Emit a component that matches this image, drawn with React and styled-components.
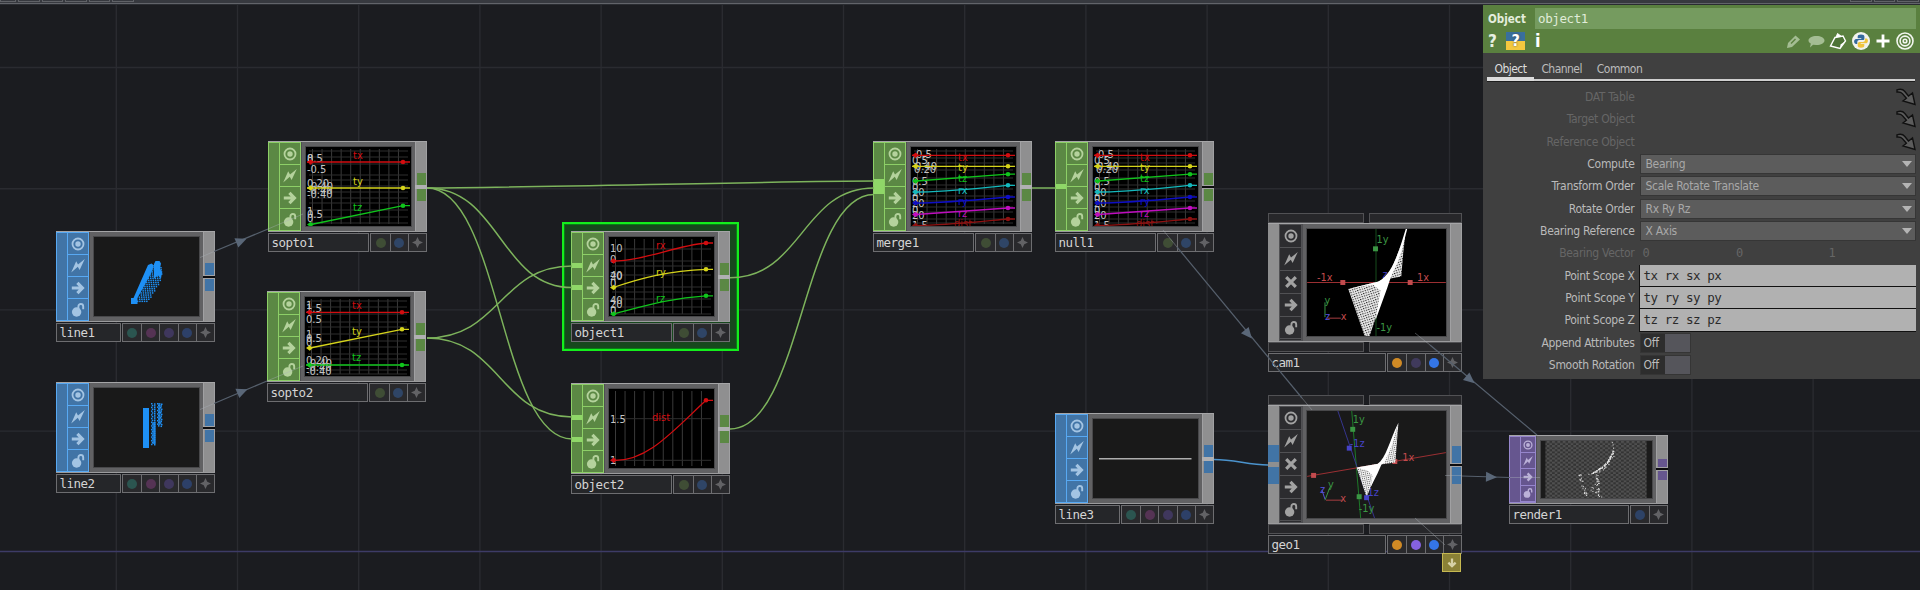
import React from 'react';
import styled, { createGlobalStyle } from 'styled-components';

const Global = createGlobalStyle`
  * { box-sizing: border-box; }
  body { margin: 0; background: #1b1c20; overflow: hidden; }
`;

const sans = '"DejaVu Sans Condensed", "DejaVu Sans", sans-serif';
const mono = '"DejaVu Sans Mono", monospace';

const families = {
  chop: { fill: '#5b8844', line: '#8dcf67', icon: '#b4d29c' },
  sop: { fill: '#4174a6', line: '#58a9f3', icon: '#a3c4e3' },
  top: { fill: '#66568f', line: '#9686cc', icon: '#bbb1d8' },
  comp: { fill: '#2c2c2f', line: '#515154', icon: '#a2a2a2' },
};

const Page = styled.div`
  display: flex;
  flex-direction: column;
  width: 1920px;
  height: 590px;
  background: #1b1c20;
`;
const TopBar = styled.div`
  height: 5px;
  flex: none;
  display: flex;
  justify-content: space-between;
  background: linear-gradient(#37393f 0 3px, #62646a 3px 4px, #2a2c31 4px);
`;
const TabGroup = styled.div`
  display: flex;
  gap: 2px;
  height: 2px;
  width: ${(p) => p.$w}px;
  overflow: hidden;
`;
const TabEdge = styled.i`
  flex: none;
  width: ${(p) => p.$w || 21.5}px;
  height: 2px;
  border: 1px solid #606267;
  border-top: 0;
`;
const Canvas = styled.main`
  position: relative;
  flex: 1;
  overflow: hidden;
`;
const Layer = styled.svg`
  position: absolute;
  left: 0;
  top: -5px;
  width: 1920px;
  height: 590px;
  pointer-events: none;
`;

/* ---------- nodes ---------- */
const NodeBox = styled.section`
  position: absolute;
  left: ${(p) => p.$x}px;
  top: ${(p) => p.$y - 5}px;
  width: ${(p) => p.$w}px;
  display: flex;
  flex-direction: column;
`;
const Selection = styled.div`
  position: absolute;
  left: 562px;
  top: 217px;
  width: 177px;
  height: 129px;
  border: 2px solid #14ee1d;
  outline: 1px solid #0b7a17;
  outline-offset: -3px;
  background: #17481d;
`;
const Body = styled.div`
  display: flex;
  height: ${(p) => p.$h}px;
  border-top: 1px solid #a5a5a7;
  border-bottom: 1px solid #9b9b9d;
  background: #616163;
`;
const InStrip = styled.div`
  width: 11px;
  display: flex;
  flex-direction: column;
  justify-content: center;
  gap: ${(p) => p.$gap || 4}px;
  background: ${(p) => (p.$kind === 'comp' ? '#8f8f90' : families[p.$kind].fill)};
  border: ${(p) => (p.$kind === 'comp' ? '0' : `1px solid ${families[p.$kind].line}`)};
  border-right: 0;
`;
const InPort = styled.i`
  display: block;
  width: 11px;
  height: ${(p) => p.$h}px;
  background: ${(p) => p.$c};
`;
const Buttons = styled.div`
  width: ${(p) => p.$w}px;
  display: flex;
  flex-direction: column;
  border: 1px solid ${(p) => families[p.$kind].line};
  background: ${(p) => families[p.$kind].fill};
  color: ${(p) => families[p.$kind].icon};
`;
const Button = styled.div`
  flex: ${(p) => (p.$h ? `0 0 ${p.$h}px` : '1')};
  min-height: 0;
  display: flex;
  align-items: center;
  justify-content: center;
  border-bottom: 1px solid ${(p) => families[p.$kind].line};
  &:last-child { border-bottom: ${(p) => (p.$h ? '' : 0)}; }
  svg { width: ${(p) => p.$s}px; height: ${(p) => p.$s}px; }
`;
const Frame = styled.div`
  flex: 1;
  display: flex;
  padding: 5px 4px;
  border-left: 1px solid #4e4e51;
`;
const View = styled.div`
  flex: 1;
  background: ${(p) => p.$bg};
  outline: 1px solid #48484a;
  overflow: hidden;
  svg { display: block; width: 100%; height: 100%; }
`;
const OutStrip = styled.div`
  width: 12px;
  display: flex;
  flex-direction: column;
  align-items: center;
  justify-content: center;
  background: #8f8f90;
  border-left: 1px solid #a0a0a2;
  border-right: 1px solid #a0a0a2;
`;
const OutPort = styled.i`
  width: 9px;
  height: ${(p) => p.$h}px;
  background: ${(p) => p.$c};
`;
const Bar = styled.i`
  height: 4px;
  width: 12px;
  background: ${(p) => (p.$open ? '#0c0c0e' : '#b0b0b2')};
  border: ${(p) => (p.$open ? '1px solid #a2a2a4' : 0)};
  border-width: 1px 0;
  flex: none;
`;
const Foot = styled.div`
  display: flex;
  gap: 1px;
  height: 19px;
  margin-top: 1px;
`;
const Name = styled.div`
  flex: 1;
  border: 1px solid #6d6d70;
  background: #252629;
  color: #d4d4d4;
  font: 12.5px/17px ${mono};
  letter-spacing: -0.5px;
  padding-left: 2.5px;
`;
const Flags = styled.div`
  display: flex;
  border: 1px solid #6d6d70;
  background: #29292c;
`;
const Flag = styled.div`
  width: 18.2px;
  display: flex;
  align-items: center;
  justify-content: center;
  border-left: 1px solid #6d6d70;
  color: #626265;
  &:first-child { border-left: 0; }
  svg { width: 11px; height: 11px; }
`;
const Dot = styled.i`
  width: 10px;
  height: 10px;
  border-radius: 50%;
  background: ${(p) => p.$c};
`;
const Tabs = styled.div`
  display: flex;
  gap: 5px;
  height: 10px;
`;
const Tab = styled.div`
  flex: ${(p) => p.$f};
  border: 1px solid #515154;
  background: #27272a;
`;
const DownBadge = styled.div`
  position: absolute;
  left: 1442px;
  top: 548px;
  width: 19px;
  height: 19px;
  display: flex;
  align-items: center;
  justify-content: center;
  border: 1px solid #c6b951;
  background: #8a8136;
  color: #d6d1a5;
  svg { width: 10px; height: 10px; transform: rotate(90deg); }
`;

const TargetIcon = () => (
  <svg viewBox="0 0 14 14" fill="none" stroke="currentColor">
    <circle cx="7" cy="7" r="5.5" strokeWidth="1.8" />
    <circle cx="7" cy="7" r="2.7" fill="currentColor" stroke="none" />
  </svg>
);
const BoltIcon = () => (
  <svg viewBox="0 0 14 14" fill="currentColor">
    <path d="M.2 13.600 5.200 2.200 7 5.600 13.800 0 8.600 11 6.800 7.800z" />
  </svg>
);
const ArrowIcon = () => (
  <svg viewBox="0 0 14 14" fill="none" stroke="currentColor" strokeWidth="3.2">
    <path d="M.8 7H11M6.400 1.900 11.400 7l-5 5.100" />
  </svg>
);
const LockIcon = () => (
  <svg viewBox="0 0 14 14" fill="currentColor">
    <circle cx="5.600" cy="9" r="4.700" />
    <path d="M7.400 6V3.400a2.400 2.400 0 0 1 4.800 0v2.800" fill="none" stroke="currentColor" strokeWidth="1.9" />
  </svg>
);
const CrossIcon = () => (
  <svg viewBox="0 0 14 14" fill="none" stroke="currentColor" strokeWidth="3.2">
    <path d="m2.200 2.200 9.600 9.600M11.800 2.200 2.200 11.800" />
  </svg>
);
const PlusStar = () => (
  <svg viewBox="0 0 10 10" fill="currentColor">
    <path d="M5 0 6.600 3.400 10 5 6.600 6.600 5 10 3.400 6.600 0 5 3.400 3.400z" />
  </svg>
);

const flagSets = {
  chop: ['#3f4d35', '#2f4566'],
  sop: ['#2b5550', '#553354', '#3f375d', '#2d4068'],
  top: ['#2d4266'],
  cam: ['#d08a25', '#403a5c', '#3475e6'],
  geo: ['#d08a25', '#8561e0', '#3475e6'],
};

function NodeFoot({ name, flags }) {
  return (
    <Foot>
      <Name>{name}</Name>
      <Flags>
        {flagSets[flags].map((c) => (
          <Flag key={c}><Dot $c={c} /></Flag>
        ))}
        <Flag><PlusStar /></Flag>
      </Flags>
    </Foot>
  );
}

function Node({ x, y, name, kind, inputs = [], gap, open, h = 91, buttonW = 22, bg = '#000', children }) {
  const small = kind === 'top';
  const { fill } = families[kind];
  const s = small ? 10 : 14;
  return (
    <NodeBox $x={x} $y={y} $w={159}>
      <Body $h={h}>
        <InStrip $kind={kind} $gap={gap}>
          {inputs.map((ih, i) => <InPort key={i} $h={ih} $c="#8fd768" />)}
        </InStrip>
        <Buttons $kind={kind} $w={buttonW}>
          {[TargetIcon, BoltIcon, ArrowIcon, LockIcon].map((Icon, i) => (
            <Button key={i} $kind={kind} $s={s} $h={small ? 16.2 : undefined}><Icon /></Button>
          ))}
        </Buttons>
        <Frame>
          <View $bg={bg}>{children}</View>
        </Frame>
        <OutStrip>
          <OutPort $h={small ? 8 : 12} $c={fill} />
          <Bar $open={open} />
          <OutPort $h={small ? 9 : 12} $c={fill} />
        </OutStrip>
      </Body>
      <NodeFoot name={name} flags={kind} />
    </NodeBox>
  );
}

function CompNode({ x, y, name, flags, ports, bg, children }) {
  const blue = families.sop.fill;
  return (
    <NodeBox $x={x} $y={y} $w={194}>
      <Tabs><Tab $f={96} /><Tab $f={93.5} /></Tabs>
      <Body $h={119}>
        <InStrip $kind="comp" $gap={5}>
          {ports && <><InPort $h={17} $c={blue} /><InPort $h={17} $c={blue} /></>}
        </InStrip>
        <Buttons $kind="comp" $w={23}>
          {[TargetIcon, BoltIcon, CrossIcon, ArrowIcon, LockIcon].map((Icon, i) => (
            <Button key={i} $kind="comp" $s={14} $h={22.9}><Icon /></Button>
          ))}
        </Buttons>
        <Frame>
          <View $bg={bg}>{children}</View>
        </Frame>
        <OutStrip>
          {ports && <><OutPort $h={17} $c={blue} /><Bar $open /><OutPort $h={17} $c={blue} /></>}
        </OutStrip>
      </Body>
      <Tabs><Tab $f={96} /><Tab $f={93.5} /></Tabs>
      <NodeFoot name={name} flags={flags} />
    </NodeBox>
  );
}

/* ---------- channel graphs ---------- */
const gridX = Array.from({ length: 10 }, (_, i) => 6.5 + i * 9.55);

function Graph({ curves, ticks, rows }) {
  return (
    <svg viewBox="0 0 105 79">
      <g stroke="#3a3a3a" fill="none">
        {gridX.map((x) => <line key={x} x1={x} x2={x} y1="2" y2="77" />)}
        {rows.map((y) => <line key={y} x1="3" x2="102" y1={y} y2={y} stroke="#2f2f2f" />)}
      </g>
      <g fontFamily={sans} fontSize="11" fill="#c4c4c4">
        {ticks.map(([t, y, x = 1], i) => <text key={i} x={x} y={y}>{t}</text>)}
      </g>
      {curves.map(({ name, c, d, a, b, lx = 47, ly }) => (
        <g key={name}>
          <path d={d} fill="none" stroke={c} strokeWidth="1.3" />
          <path d={`M1 ${a}l3.800-2.800 2.800 2.800-2.800 2.800z`} fill={c} />
          <circle cx="97" cy={b} r="2.3" fill={c} />
          <text x={lx} y={ly} fill={c} fontFamily={sans} fontSize="11">{name}</text>
        </g>
      ))}
    </svg>
  );
}

const RED = '#d20d10', YEL = '#d5d31b', GRN = '#10c51c';
const flat = (y) => ({ d: `M1 ${y}H104`, a: y, b: y });
const slope = (a, b) => ({ d: `M5 ${a}L97 ${b}H104`, a, b });
const ease = (a, b) => ({ d: `M3 ${a}C35 ${a} 65 ${b + 3} 97 ${b}H104`, a, b });

const graphs = {
  sopto1: {
    rows: [4, 10, 17, 28, 33, 39, 45, 51, 56, 63, 70, 76],
    ticks: [['8', 15], ['0.5', 15], ['-0.5', 26], ['0.20', 40], ['-0.40', 47], ['-0.40', 51], ['0.40', 43, 5], ['1', 68], ['0.5', 71], ['0', 75]],
    curves: [
      { name: 'tx', c: RED, ...flat(15), ly: 11.5 },
      { name: 'ty', c: YEL, ...flat(41), ly: 37.5 },
      { name: 'tz', c: GRN, ...slope(77.5, 58.7), ly: 64 },
    ],
  },
  sopto2: {
    rows: [4, 10, 17, 25, 30, 37, 44, 50, 57, 62, 68, 73, 77],
    ticks: [['1', 12], ['1.5', 14.5], ['0.5', 25.5], ['1', 41], ['0.5', 44.5], ['0', 49], ['0.20', 67], ['-0.40', 74], ['-0.40', 78], ['0.40', 70, 5]],
    curves: [
      { name: 'tx', c: RED, ...flat(15.3), ly: 11.5 },
      { name: 'ty', c: YEL, ...slope(51, 32.3), ly: 37.5 },
      { name: 'tz', c: GRN, ...flat(68), ly: 64 },
    ],
  },
  object1: {
    rows: [12, 24, 29, 38, 50, 55, 62, 70, 77],
    ticks: [['10', 14.7], ['0', 26], ['20', 43], ['40', 41.5], ['0', 50], ['40', 67], ['20', 71], ['0', 77]],
    curves: [
      { name: 'rx', c: RED, ...ease(24, 6), ly: 12 },
      { name: 'ry', c: YEL, d: 'M4 50.500C32 41 60 33.500 97 32.300H104', a: 50.5, b: 32.3, ly: 38.5 },
      { name: 'rz', c: GRN, d: 'M4 77C32 70 60 61 97 58.800H104', a: 77, b: 58.8, ly: 65 },
    ],
  },
  object2: {
    rows: [29.7, 71.3],
    ticks: [['1.5', 33.5], ['1', 75]],
    curves: [{ name: 'dist', c: RED, d: 'M4 71.300C38 73 64 42 97 11.300H104', a: 71.3, b: 11.3, lx: 43, ly: 32 }],
  },
  merge: {
    rows: [4, 11, 16, 23, 31, 38, 42, 49, 54, 60, 65, 72, 76],
    ticks: [['0.5', 11, 5], ['0.5', 17], ['0.40', 23, 4], ['0.20', 26, 3], ['0.5', 38], ['20', 49], ['0', 44], ['20', 60], ['0', 55], ['20', 71.5], ['0', 67], ['1.5', 82]],
    curves: [
      { name: 'tx', c: RED, ...flat(8.3), ly: 13.5 },
      { name: 'ty', c: YEL, ...flat(19.3), ly: 24 },
      { name: 'tz', c: GRN, ...slope(34, 27.2), ly: 35 },
      { name: 'rx', c: '#14b9bd', ...ease(45, 38.3), ly: 46.5 },
      { name: 'ry', c: '#0e0ec4', ...ease(56, 50), ly: 58 },
      { name: 'rz', c: '#bf0dbf', ...slope(67.5, 61), ly: 69.5 },
      { name: 'dist', c: '#8e1111', ...ease(78.5, 72), lx: 43, ly: 79.5 },
    ],
  },
};

/* ---------- geometry previews ---------- */
const clusterDots = (list, r = 1.5) =>
  list.map(([x, y], i) => <rect key={i} x={x} y={y} width={r} height={r} />);

const Line1View = () => {
  const pts = [];
  for (let y = 30, row = 0; y < 65; y += 2.1, row += 1) {
    const left = 57 - (y - 30) * 0.42;
    const right = 67 - Math.max(0, y - 42) * 0.62;
    for (let x = left + (row % 2) * 1.1; x < right; x += 2.3) pts.push([x, y]);
  }
  return (
    <svg viewBox="0 0 105 79" fill="#1e90f5">
      <path d="M37 61h2.500L43 53l11-25 3.500-1.500 2.500 2-3 8L43.500 61v6H37z" />
      <path d="M60 27l1.500-3h4l1.500 2.500-1 5 2 4-1 6-3-3-4 3z" />
      {clusterDots(pts)}
    </svg>
  );
};

const Line2View = () => {
  const pts = [];
  for (let i = 0; i < 23; i++) {
    pts.push([57 + (i % 2) * 0.8, 15 + i * 1.85], [60, 15.3 + i * 1.85]);
    if (i < 14) pts.push([63 + (i % 2), 15 + i * 1.7], [67 - (i % 3) * 0.5, 15.5 + i * 1.7]);
  }
  return (
    <svg viewBox="0 0 105 79" fill="#1e90f5">
      <rect x="49" y="20" width="6" height="40" />
      <path d="M58.500 34h3v22h-3zM64.500 15h2v22h-2z" opacity=".8" />
      {clusterDots(pts, 1.5)}
    </svg>
  );
};

const LineView = () => (
  <svg viewBox="0 0 105 79"><path d="M6 39.800H98.500" stroke="#adadad" strokeWidth="1.4" /></svg>
);

const axisFont = { fontFamily: sans, fontSize: 11 };

const CamView = () => (
  <svg viewBox="0 0 140 108" {...axisFont}>
    <defs>
      <pattern id="mesh" width="2.4" height="2.4" patternUnits="userSpaceOnUse" patternTransform="rotate(-18)">
        <rect width="2.4" height="2.4" fill="#e8e8e8" />
        <rect width="1.2" height="1" fill="#161616" />
      </pattern>
    </defs>
    <path d="M69.500 0V108" stroke="#174d1c" />
    <path d="M0 54H140" stroke="#9d3033" />
    <g fill="#c24b4e"><rect x="33.500" y="51.500" width="5" height="5" /><rect x="101.500" y="51.500" width="5" height="5" />
      <text x="10" y="52">-1x</text><text x="111" y="52">1x</text></g>
    <g fill="#3b9644"><rect x="66.500" y="17.500" width="5" height="5" /><text x="70" y="14">1y</text><text x="70" y="103">-1y</text></g>
    <text x="76" y="49" fill="#403dc2">z</text>
    <path d="M41.500 60.500 72 53 82 48 81 55 63 108H58z" fill="url(#mesh)" />
    <path d="M82 48 99 6 97 24 95 48 84 50z" fill="url(#mesh)" />
    <path d="M101 0 95 23C92 34 87 42 84 50L81 59 69 92 74 62 66 56 41.500 60.500 72 53C86 45 92 25 99.500 0z" fill="#fff" />
    <path d="M18 74V89" stroke="#3b9644" /><path d="M20 90H34" stroke="#a83e42" />
    <text x="17.500" y="76" fill="#3b9644">y</text><text x="18" y="92" fill="#5552dc">z</text><text x="34" y="92" fill="#c24b4e">x</text>
  </svg>
);

const GeoView = () => (
  <svg viewBox="0 0 140 108" {...axisFont}>
    <defs>
      <pattern id="mesh2" width="2" height="2" patternUnits="userSpaceOnUse" patternTransform="rotate(-12)">
        <rect width="2" height="2" fill="#f4f4f4" />
        <rect width="1" height=".8" fill="#333" />
      </pattern>
    </defs>
    <path d="M45 0 54 108" stroke="#1d7a28" />
    <path d="M31 0 68 108" stroke="#36358e" />
    <path d="M0 66 140 42" stroke="#9d3033" />
    <g fill="#c24b4e"><rect x="4" y="62.500" width="5" height="5" /><rect x="86" y="48.500" width="5" height="5" /><text x="96" y="50">1x</text></g>
    <g fill="#3b9644"><rect x="43.500" y="16" width="5" height="5" /><rect x="50" y="84" width="5" height="5" /><text x="46" y="12">1y</text><text x="52" y="101.500">-1y</text></g>
    <g fill="#4643c8"><rect x="40" y="35" width="5" height="5" /><text x="43" y="36.500">-1z</text><text x="61" y="86">1z</text></g>
    <path d="M50 57 73 53 68 67 60 87 56 75z" fill="url(#mesh2)" />
    <path d="M92 14 89 52 74 54C80 48 84 32 92 12z" fill="url(#mesh2)" />
    <path d="M92 12 85 36 78 52 75 54 71 63 64 77 66 65 61 60 50 57 71 53.500C80 47 83 30 92 12z" fill="#fff" />
    <rect x="57.500" y="85" width="5" height="5" fill="#4643c8" />
    <path d="M18 90 23 77" stroke="#3b9644" /><path d="M19 90H35" stroke="#a83e42" /><path d="M18 89 15 80" stroke="#5552dc" />
    <text x="21" y="78" fill="#3b9644">y</text><text x="13" y="83" fill="#5552dc">z</text><text x="33.500" y="92" fill="#c24b4e">x</text>
  </svg>
);

const RenderView = () => {
  const pts = [];
  let seed = 7;
  const rnd = () => ((seed = (seed * 16807) % 2147483647) / 2147483647);
  for (let i = 0; i < 100; i++) {
    const t = Math.sqrt(rnd());
    pts.push([73 - 22 * t * t * t - rnd() * 1.5 + (rnd() > 0.8 ? rnd() * 6 * t : 0), 1 + t * 32]);
  }
  for (let i = 0; i < 60; i++) {
    const t = rnd();
    const side = rnd();
    const off = side < 0.4 ? rnd() * 3 : side < 0.8 ? 18 - 6 * t + rnd() * 3 : rnd() * 18;
    pts.push([37 + t * 7 + off, 33 + t * 25]);
  }
  return (
    <svg viewBox="0 0 112 58">
      <defs>
        <pattern id="check" width="5.4" height="4.2" patternUnits="userSpaceOnUse">
          <rect width="5.4" height="4.2" fill="#333" />
          <rect width="2.9" height="2.1" fill="#505050" />
          <rect x="2.7" y="2.1" width="2.9" height="2.1" fill="#505050" />
        </pattern>
      </defs>
      <rect x="4" width="103" height="58" fill="url(#check)" />
      <g fill="#e8e8e8">{clusterDots(pts, 1)}</g>
    </svg>
  );
};

/* ---------- network wiring ---------- */
const lines = (start, end) => {
  const out = [];
  for (let v = start; v < end; v += 121.2) out.push(v);
  return out;
};

const Grid = () => (
  <Layer viewBox="0 0 1920 590">
    <g stroke="#2a2b30" strokeWidth="1.4">
      {lines(116.3, 1920).map((x) => <line key={x} x1={x} x2={x} y1="5" y2="590" />)}
      {lines(67.5, 500).map((y) => <line key={y} x1="0" x2="1920" y1={y} y2={y} />)}
    </g>
    <path d="M0 551.500H1920" stroke="#3d3b66" strokeWidth="1.5" />
  </Layer>
);

const chopWires = [
  'M427 188C520 188 780 181 874 181',
  'M427 188C500 188 500 287.500 572 287.500',
  'M427 188C500 188 500 439 572 439',
  'M427 338C500 338 500 266 572 266',
  'M427 338C500 338 500 417 572 417',
  'M730 277.700C802 277.700 802 188 874 188',
  'M730 429C802 429 802 194.500 874 194.500',
  'M1032 188H1056',
];
const links = [
  [214, 251.5, 268, 229, 241, 241],
  [214, 403.5, 267, 381, 242, 391.5],
  [1177, 247, 1302, 398, 1248, 334],
  [1430, 345, 1537, 435, 1470, 379.5],
  [1462, 476, 1510, 477.5, 1491, 477],
];
const ghosts = 'M200 257.500 214 251.500M200 409.500 214 403.500M268 229 303 214M267 381 303 366M1163 230 1177 247M1302 398 1312 410M1445 475.500H1462M1510 477.500H1540M1415 333 1430 345M1415 518 1445 545';

const Wires = () => (
  <Layer viewBox="0 0 1920 590" fill="none">
    <g stroke="#7db35c" strokeWidth="1.5">{chopWires.map((d) => <path key={d} d={d} />)}</g>
    <path d="M1214 459.500C1235 459.500 1248 465 1268 465" stroke="#4b93cd" strokeWidth="1.6" />
    <path d={ghosts} stroke="#aab2ba" opacity=".4" />
    {links.map(([x1, y1, x2, y2, ax, ay]) => (
      <g key={x1 + y1}>
        <path d={`M${x1} ${y1}L${x2} ${y2}`} stroke="#56606d" strokeWidth="1.2" />
        <path
          d="M-5-5 6 0-5 5z"
          fill="#5a6778"
          transform={`translate(${ax} ${ay}) rotate(${(Math.atan2(y2 - y1, x2 - x1) * 180) / Math.PI})`}
        />
      </g>
    ))}
  </Layer>
);

/* ---------- parameter panel ---------- */
const Panel = styled.aside`
  position: absolute;
  left: 1483px;
  top: -1px;
  width: 437px;
  height: 375px;
  display: flex;
  flex-direction: column;
  background: #404040;
  font-family: ${sans};
  letter-spacing: -0.3px;
`;
const Header = styled.header`
  height: 49px;
  flex: none;
  padding: 4px 4px 0 5px;
  background: #5a803f;
`;
const TitleRow = styled.div`
  display: flex;
  align-items: center;
  height: 21px;
`;
const Title = styled.b`
  width: 47px;
  color: #e4eddd;
  font: bold 11.5px/20px ${sans};
  letter-spacing: 0;
`;
const TitleInput = styled.div`
  flex: 1;
  height: 21px;
  padding-left: 3px;
  background: #759b5f;
  color: #e0ecd9;
  font: 12.5px/22px ${mono};
  letter-spacing: -0.4px;
`;
const IconRow = styled.div`
  display: flex;
  align-items: center;
  height: 24px;
`;
const HelpMark = styled.b`
  width: 18px;
  color: #e8f0e2;
  font: bold 17px/20px ${sans};
`;
const PyHelp = styled.b`
  width: 19px;
  height: 18px;
  background: linear-gradient(#396f9d 50%, #f3c83f 50%);
  color: #fff;
  text-align: center;
  font: bold 16px/18px ${sans};
  text-shadow: 0 0 2px #444;
`;
const Info = styled.b`
  padding-left: 10px;
  color: #fff;
  font: bold 18px/20px ${sans};
`;
const Tools = styled.div`
  margin-left: auto;
  display: grid;
  grid-template-columns: repeat(6, 22.2px);
  place-items: center;
  svg { display: block; }
`;
const TabRow = styled.nav`
  display: flex;
  height: 29px;
  margin: 0 5px 0 4px;
  border-bottom: 1px solid #1e1e1e;
  box-shadow: inset 0 -2px #cfcfcf;
`;
const TabLabel = styled.div`
  padding: 9px 7.5px 0;
  height: 28px;
  color: ${(p) => (p.$on ? '#dcdcdc' : '#bcbcbc')};
  border-bottom: ${(p) => (p.$on ? '4px solid #dcdcdc' : 0)};
  font-size: 12px;
  line-height: 14px;
  letter-spacing: -0.55px;
`;
const Rows = styled.div`
  display: flex;
  flex-direction: column;
  padding: 4px 4px 0 0;
`;
const Row = styled.div`
  height: 22.33px;
  display: flex;
  align-items: center;
`;
const Label = styled.div`
  width: 151.5px;
  margin-right: 5px;
  text-align: right;
  color: ${(p) => (p.$dim ? '#666' : '#bababa')};
  font-size: 12px;
  line-height: 20px;
  white-space: nowrap;
`;
const Select = styled.div`
  flex: 1;
  height: 20px;
  display: flex;
  align-items: center;
  justify-content: space-between;
  padding: 0 3px 0 5px;
  background: #5c5c5c;
  border: 1px solid #363636;
  color: #a8a8a8;
  font-size: 12px;
`;
const Caret = styled.i`
  border: 5px solid transparent;
  border-top: 6px solid #b4b4b4;
  border-bottom: 0;
`;
const Field = styled.div`
  flex: 1;
  height: 22.33px;
  padding-left: 4px;
  background: #b1b1b1;
  border-left: 1px solid #111;
  border-bottom: 1.5px solid #111;
  margin-left: -1px;
  color: #2a2a2a;
  font: 12.5px/22px ${mono};
  letter-spacing: -0.45px;
  white-space: pre;
`;
const Vector = styled.div`
  flex: 1;
  display: grid;
  grid-template-columns: 93.5px 92.5px 1fr;
  padding-left: 3px;
  color: #666;
  font: 12px ${mono};
`;
const Toggle = styled.div`
  width: 51px;
  height: 20px;
  display: flex;
  border: 1px solid #353535;
  background: #2d2d2d;
  color: #bcbcbc;
  font-size: 12px;
  line-height: 18px;
  padding-left: 3px;
  justify-content: space-between;
`;
const Knob = styled.i`
  width: 25px;
  background: #55555b;
`;
const RefArrow = styled.svg`
  margin-left: auto;
  width: 20px;
  height: 18px;
`;

const PythonIcon = () => (
  <svg width="18" height="18" viewBox="0 0 18 18">
    <circle cx="9" cy="9" r="9" fill="#f1f3ef" />
    <path d="M9 2.500c-2.500 0-3.300.8-3.300 2v1.800h3.600v.7H4.200c-1.200 0-2.100 1-2.100 2.600s.8 2.400 2 2.400h1.200V10c0-1.100.9-1.900 2-1.900h3.400c1 0 1.700-.8 1.700-1.700V4.500c0-1.200-1-2-3.400-2z" fill="#34699c" />
    <path d="M9 15.800c2.500 0 3.300-.8 3.300-2V12H8.700v-.7h5.100c1.200 0 2.100-1 2.100-2.600s-.8-2.200-2-2.200h-1v1.800c0 1.100-.9 1.700-2 1.700H7.500c-1 0-1.800.8-1.800 1.700v2.100c0 1.200 1 2 3.300 2z" fill="#f0c53d" />
  </svg>
);

const params = [
  { label: 'DAT Table', type: 'ref' },
  { label: 'Target Object', type: 'ref' },
  { label: 'Reference Object', type: 'ref' },
  { label: 'Compute', type: 'select', value: 'Bearing' },
  { label: 'Transform Order', type: 'select', value: 'Scale Rotate Translate' },
  { label: 'Rotate Order', type: 'select', value: 'Rx Ry Rz' },
  { label: 'Bearing Reference', type: 'select', value: 'X Axis' },
  { label: 'Bearing Vector', type: 'vector', value: [0, 0, 1] },
  { label: 'Point Scope X', type: 'field', value: 'tx rx sx px' },
  { label: 'Point Scope Y', type: 'field', value: 'ty ry sy py' },
  { label: 'Point Scope Z', type: 'field', value: 'tz rz sz pz' },
  { label: 'Append Attributes', type: 'toggle', value: 'Off' },
  { label: 'Smooth Rotation', type: 'toggle', value: 'Off' },
];

function Control({ type, value }) {
  if (type === 'select') return <Select>{value}<Caret /></Select>;
  if (type === 'field') return <Field>{value}</Field>;
  if (type === 'vector') return <Vector>{value.map((v, i) => <span key={i}>{v}</span>)}</Vector>;
  if (type === 'toggle') return <Toggle>{value}<Knob /></Toggle>;
  return (
    <RefArrow viewBox="0 0 20 18">
      <path d="M1 1.800C4.500 .8 7 1.200 8.600 3.200L12.500 8 16.500 5 19 16.500 7 13l3.400-2.800L6.400 5.600C5.200 4.200 3.500 3.800 1 4z" fill="#5c5c5c" stroke="#101010" strokeWidth="1.4" />
    </RefArrow>
  );
}

function ParameterPanel() {
  return (
    <Panel>
      <Header>
        <TitleRow><Title>Object</Title><TitleInput>object1</TitleInput></TitleRow>
        <IconRow>
          <HelpMark>?</HelpMark><PyHelp>?</PyHelp><Info>i</Info>
          <Tools>
            <svg width="15" height="15" viewBox="0 0 15 15"><path d="M1 14 2 9 9.500 1.500 14 5.500 6 13z" fill="#a4bd93" /><path d="m5 9.500 4.500-4.500" stroke="#5a803f" strokeWidth="1.5" /></svg>
            <svg width="17" height="13" viewBox="0 0 17 13"><path d="M8.500 1c4.500 0 8 1.800 8 4.500S13 10 8.500 10L5 9.800 2 12.500l.8-4C1.500 7.800.5 6.800.5 5.500.5 2.800 4 1 8.500 1z" fill="#a4bd93" /></svg>
            <svg width="18" height="18" viewBox="0 0 18 18"><path d="M6 5.500 14 4 16.500 9 11 16.500 1.500 14z" fill="#4d7336" stroke="#fff" strokeWidth="1.4" /><path d="m7 5.500 1.500-4L12.500 4.500" fill="#fff" stroke="#fff" /><path d="m16.500 9-5 3.500-.5 4z" fill="#fff" /></svg>
            <PythonIcon />
            <svg width="16" height="16" viewBox="0 0 16 16"><path d="M8 1.500v13M1.500 8h13" stroke="#fff" strokeWidth="2.8" /></svg>
            <svg width="18" height="18" viewBox="0 0 18 18" fill="none" stroke="#f2f6ef" strokeWidth="1.6"><circle cx="9" cy="9" r="8" /><circle cx="9" cy="9" r="4.900" /><circle cx="9" cy="9" r="1.800" /></svg>
          </Tools>
        </IconRow>
      </Header>
      <TabRow><TabLabel $on>Object</TabLabel><TabLabel>Channel</TabLabel><TabLabel>Common</TabLabel></TabRow>
      <Rows>
        {params.map((p) => (
          <Row key={p.label}>
            <Label $dim={p.type === 'ref' || p.type === 'vector'}>{p.label}</Label>
            <Control {...p} />
          </Row>
        ))}
      </Rows>
    </Panel>
  );
}

export default function App() {
  return (
    <Page>
      <Global />
      <TopBar>
        <TabGroup $w={134}><TabEdge $w={16} />{[0, 1, 2, 3, 4].map((i) => <TabEdge key={i} />)}</TabGroup>
        <TabGroup $w={70}>{[0, 1, 2].map((i) => <TabEdge key={i} />)}</TabGroup>
      </TopBar>
      <Canvas>
        <Grid />
        <Selection />
        <Node x={56} y={231} name="line1" kind="sop" open bg="#191919"><Line1View /></Node>
        <Node x={56} y={382} name="line2" kind="sop" open bg="#191919"><Line2View /></Node>
        <Node x={268} y={141} name="sopto1" kind="chop"><Graph {...graphs.sopto1} /></Node>
        <Node x={267} y={291} name="sopto2" kind="chop"><Graph {...graphs.sopto2} /></Node>
        <Node x={571} y={231} name="object1" kind="chop" inputs={[5, 5]} gap={17}><Graph {...graphs.object1} /></Node>
        <Node x={571} y={383} name="object2" kind="chop" inputs={[5, 5]} gap={17}><Graph {...graphs.object2} /></Node>
        <Node x={873} y={141} name="merge1" kind="chop" inputs={[15]}><Graph {...graphs.merge} /></Node>
        <Node x={1055} y={141} name="null1" kind="chop" inputs={[5]} open><Graph {...graphs.merge} /></Node>
        <Node x={1055} y={413} name="line3" kind="sop" bg="#191919"><LineView /></Node>
        <CompNode x={1268} y={213} name="cam1" flags="cam" bg="#000"><CamView /></CompNode>
        <CompNode x={1268} y={395} name="geo1" flags="geo" ports bg="#191919"><GeoView /></CompNode>
        <Node x={1509} y={435} name="render1" kind="top" h={69} buttonW={16} open bg="#1b1b1b"><RenderView /></Node>
        <DownBadge><ArrowIcon /></DownBadge>
        <Wires />
        <ParameterPanel />
      </Canvas>
    </Page>
  );
}
